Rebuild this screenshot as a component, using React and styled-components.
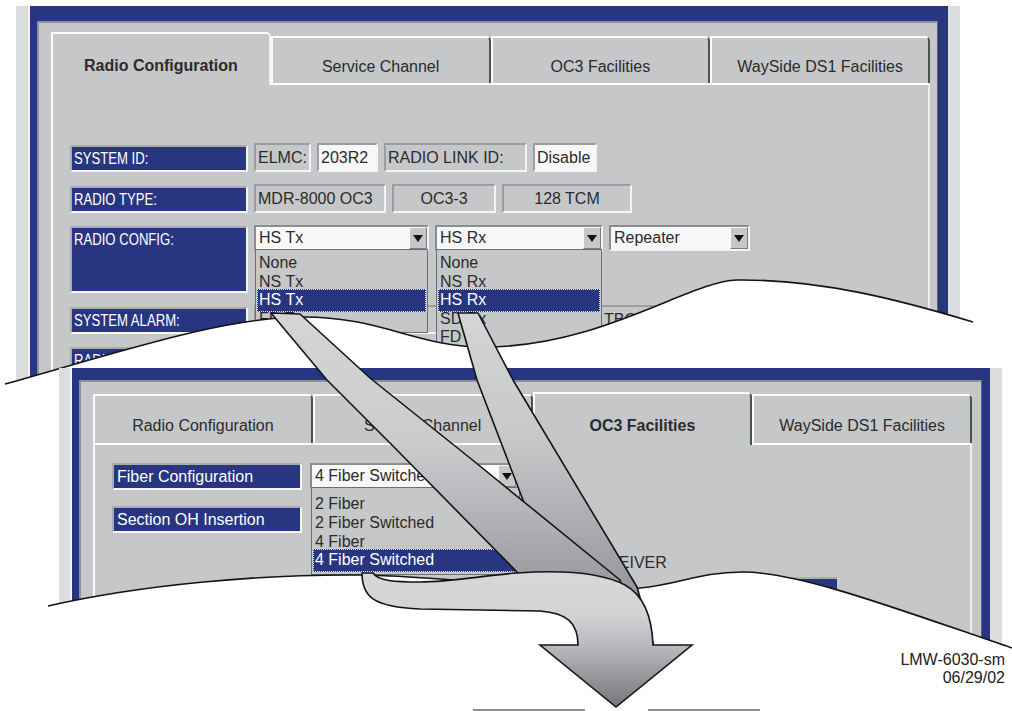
import React from 'react';
import styled, { createGlobalStyle, css } from 'styled-components';

const BLUE = '#283682';
const PANEL = '#c6c7c9';
const INK = '#2b2b2b';

const GlobalStyle = createGlobalStyle`
  html, body {
    margin: 0;
    padding: 0;
    background: #fff;
  }
  body {
    font-family: "Liberation Sans", Arial, sans-serif;
  }
`;

const Canvas = styled.div`
  position: relative;
  width: 1012px;
  height: 711px;
  overflow: hidden;
  background: #fff;
  font-family: "Liberation Sans", Arial, sans-serif;
`;

/* one captured screen, placed on the illustration canvas */
const Screen = styled.div`
  position: absolute;
  isolation: isolate;
  left: ${p => p.$x}px;
  top: ${p => p.$y}px;
  width: ${p => p.$w}px;
  height: ${p => p.$h}px;
  box-sizing: border-box;
  display: flex;
  padding: 0 12px 0 ${p => p.$bezel}px;
  background: #dcdde0;
`;

const Frame = styled.div`
  flex: 1;
  display: flex;
  border-left: 2px solid #f3f3f4;
  background: ${BLUE};
  padding: ${p => p.$top}px ${p => p.$right}px 0 7px;
`;

const Panel = styled.div`
  flex: 1;
  display: flex;
  flex-direction: column;
  background: ${PANEL};
  border-top: 2px solid #8d9199;
  border-left: 2px solid #8d9199;
  border-right: 1px solid #5d6168;
  padding: ${p => p.$top}px ${p => p.$right}px 0 12px;
`;

const TabBar = styled.div`
  display: flex;
  align-items: flex-end;
  height: 51px;
  position: relative;
  z-index: 2;
`;

const Tab = styled.div`
  flex: 1;
  box-sizing: border-box;
  height: ${p => (p.$active ? 53 : p.$h)}px;
  margin-bottom: ${p => (p.$active ? -2 : 0)}px;
  padding-top: 12px;
  display: flex;
  align-items: center;
  justify-content: center;
  background: ${PANEL};
  border-top: 2px solid #fbfbfb;
  border-left: 2px solid #fbfbfb;
  border-right: 2px solid ${p => p.$edge || '#4b5152'};
  border-top-right-radius: 5px;
  font-size: 16px;
  font-weight: ${p => (p.$active ? 700 : 400)};
  color: ${INK};
  white-space: nowrap;
`;

const TabBody = styled.div`
  flex: 1;
  display: flex;
  flex-direction: column;
  gap: ${p => p.$gap}px;
  border: 2px solid #fbfbfb;
  border-right-color: #eceef0;
  border-bottom: none;
  padding: ${p => p.$top}px 17px 0;
`;

const Row = styled.div`
  display: flex;
  align-items: flex-start;
  gap: ${p => p.$gap}px;
`;

const Label = styled.div`
  flex: none;
  box-sizing: border-box;
  width: ${p => p.$w}px;
  height: ${p => p.$h || 27}px;
  padding: 0 ${p => p.$pad}px;
  background: ${BLUE};
  border: 2px solid;
  border-color: #a9abb0 #f5f5f5 #f5f5f5 #a9abb0;
  color: #fff;
  font-size: 16px;
  line-height: 23px;
  white-space: nowrap;
  overflow: hidden;
`;

const Narrow = styled.span`
  display: inline-block;
  transform: scaleX(0.82);
  transform-origin: left center;
`;

const Field = styled.div`
  flex: none;
  box-sizing: border-box;
  width: ${p => p.$w}px;
  height: 29px;
  margin-top: -2px;
  padding: 0 ${p => (p.$center ? 0 : 2)}px;
  border: 2px solid;
  border-color: #9a9da2 #f4f4f4 #f4f4f4 #9a9da2;
  background: ${p => (p.$white ? '#f8f8f8' : PANEL)};
  text-align: ${p => (p.$center ? 'center' : 'left')};
  font-size: 16px;
  line-height: 25px;
  color: ${INK};
  white-space: nowrap;
  overflow: hidden;
`;

const Select = styled.div`
  position: relative;
  flex: none;
  box-sizing: border-box;
  width: ${p => p.$w}px;
  height: 26px;
  margin-top: ${p => p.$mt || 0}px;
  display: flex;
  border: 2px solid;
  border-color: #8a8d92 #f4f4f4 #f4f4f4 #8a8d92;
  background: #f8f8f8;
`;

const SelectValue = styled.div`
  flex: 1;
  padding-left: ${p => p.$pad}px;
  font-size: 16px;
  line-height: 22px;
  color: ${INK};
  white-space: nowrap;
  overflow: hidden;
`;

const DropButton = styled.div`
  flex: none;
  width: 18px;
  box-sizing: border-box;
  display: flex;
  align-items: center;
  justify-content: center;
  background: ${PANEL};
  border: 1px solid;
  border-color: #fafafa #7b7e83 #7b7e83 #fafafa;

  &::after {
    content: '';
    border-left: 5px solid transparent;
    border-right: 5px solid transparent;
    border-top: 7px solid #111;
  }
`;

const List = styled.div`
  position: absolute;
  z-index: 3;
  top: 100%;
  left: -1px;
  right: ${p => p.$right}px;
  box-sizing: border-box;
  padding: ${p => p.$pad}px 1px 4px;
  border: 1px solid #6c6f73;
  background: ${PANEL};
`;

const Option = styled.div`
  height: ${p => p.$pitch}px;
  padding-left: 2px;
  font-size: 16px;
  line-height: ${p => p.$pitch}px;
  color: ${INK};
  white-space: nowrap;
  overflow: hidden;

  ${p =>
    p.$selected &&
    css`
      box-sizing: border-box;
      height: ${p.$pitch + 4}px;
      margin: -2px 0;
      padding-left: 1px;
      line-height: ${p.$pitch + 2}px;
      border: 1px dotted #e3e6f6;
      background: ${BLUE};
      color: #fff;
    `}
`;

const PlainText = styled.div`
  margin-left: ${p => p.$indent}px;
  font-size: 16px;
  line-height: 27px;
  color: ${INK};
  white-space: nowrap;
`;

const Block = styled.div`
  flex: none;
  width: ${p => p.$w}px;
  height: 27px;
  margin: ${p => p.$top}px 0 0 ${p => p.$left}px;
  background: ${BLUE};
  border-top: 2px solid #a9abb0;
`;

const Overlay = styled.svg`
  position: absolute;
  left: 0;
  top: 0;
  width: 1012px;
  height: 711px;
  pointer-events: none;
`;

const Caption = styled.div`
  position: absolute;
  right: 7px;
  top: 651px;
  text-align: right;
  font-size: 16px;
  line-height: 18px;
  color: #222;
`;

const Rule = styled.div`
  position: absolute;
  left: ${p => p.$x}px;
  top: 709px;
  width: ${p => p.$w}px;
  height: 2px;
  background: #8e8e8e;
`;

const TOP_CURVE =
  'M5,384 C120,352 220,318 300,317 C380,316 420,348 485,347 C600,347 690,281 737,280 C820,279 900,300 973,322';
const BOTTOM_CURVE =
  'M48,606 C140,585 260,574 360,575 C460,576 560,595 640,588 C680,584 700,572 743,572 C800,572 900,610 1012,648';

const Tear = ({ curve, close }) => (
  <Overlay viewBox="0 0 1012 711">
    <path d={curve + close} fill="#fff" />
    <path d={curve} fill="none" stroke="#141414" strokeWidth="1.6" />
  </Overlay>
);

const Arrows = () => (
  <Overlay viewBox="0 0 1012 711">
    <defs>
      <linearGradient id="bandB" gradientUnits="userSpaceOnUse" x1="0" y1="313" x2="0" y2="620">
        <stop offset="0" stopColor="#d4d5d7" />
        <stop offset="0.4" stopColor="#c7c8ca" />
        <stop offset="1" stopColor="#8d8e92" />
      </linearGradient>
      <linearGradient id="bandA" gradientUnits="userSpaceOnUse" x1="0" y1="313" x2="0" y2="600">
        <stop offset="0" stopColor="#d4d5d7" />
        <stop offset="0.45" stopColor="#cbccce" />
        <stop offset="0.75" stopColor="#aeafb2" />
        <stop offset="1" stopColor="#939498" />
      </linearGradient>
      <linearGradient id="bigArrow" gradientUnits="userSpaceOnUse" x1="0" y1="575" x2="0" y2="707">
        <stop offset="0" stopColor="#d6d7d9" />
        <stop offset="0.3" stopColor="#d2d3d5" />
        <stop offset="0.55" stopColor="#b7b8bb" />
        <stop offset="1" stopColor="#75767a" />
      </linearGradient>
    </defs>
    <path
      d="M458,313 L478,313 L513,380 L637,587 L655,650 L600,650 L523,500 L477,380 Z"
      fill="url(#bandB)"
      stroke="#141414"
      strokeWidth="1.6"
      strokeLinejoin="round"
    />
    <path
      d="M271,313 L300,314 L370,378 L470,458 L620,580 L635,640 L600,640 L517,572 L390,443 L327,380 Z"
      fill="url(#bandA)"
      stroke="#141414"
      strokeWidth="1.6"
      strokeLinejoin="round"
    />
    <path
      d="M362,573 C362,596 372,607 420,609 L540,611 C566,613 578,622 578,645 L540,645 L616,707 L692,645 L653,645 C652,618 645,596 625,585 C600,572 560,570 517,573 C480,576 450,582 420,582 C395,582 378,581 373,573 Z"
      fill="url(#bigArrow)"
      stroke="#141414"
      strokeWidth="1.6"
      strokeLinejoin="miter"
    />
  </Overlay>
);

const txOptions = ['None', 'NS Tx', 'HS Tx', 'FD Tx'];
const rxOptions = ['None', 'NS Rx', 'HS Rx', 'SD Rx', 'FD Rx'];
const fiberOptions = ['2 Fiber', '2 Fiber Switched', '4 Fiber', '4 Fiber Switched'];

const Dropdown = ({ items, selected, pitch, pad, right }) => (
  <List $pad={pad} $right={right}>
    {items.map(item => (
      <Option key={item} $pitch={pitch} $selected={item === selected}>
        {item}
      </Option>
    ))}
  </List>
);

const TopScreen = () => (
  <Screen $x={16} $y={6} $w={944} $h={400} $bezel={12}>
    <Frame $top={15} $right={10}>
      <Panel $top={9} $right={7}>
        <TabBar>
          <Tab $active $edge="#f4f4f4">Radio Configuration</Tab>
          <Tab $h={47}>Service Channel</Tab>
          <Tab $h={47}>OC3 Facilities</Tab>
          <Tab $h={47}>WaySide DS1 Facilities</Tab>
        </TabBar>
        <TabBody $top={60} $gap={13.5}>
          <Row $gap={6}>
            <Label $w={178} $pad={2}><Narrow>SYSTEM ID:</Narrow></Label>
            <Field $w={57}>ELMC:</Field>
            <Field $w={61} $white>203R2</Field>
            <Field $w={143}>RADIO LINK ID:</Field>
            <Field $w={64} $white>Disable</Field>
          </Row>
          <Row $gap={6}>
            <Label $w={178} $pad={2}><Narrow>RADIO TYPE:</Narrow></Label>
            <Field $w={132}>MDR-8000 OC3</Field>
            <Field $w={104} $center>OC3-3</Field>
            <Field $w={130} $center>128 TCM</Field>
          </Row>
          <Row $gap={6}>
            <Label $w={178} $h={67} $pad={2}><Narrow>RADIO CONFIG:</Narrow></Label>
            <Select $w={175} $mt={-1}>
              <SelectValue $pad={3}>HS Tx</SelectValue>
              <DropButton />
              <Dropdown items={txOptions} selected="HS Tx" pitch={18.5} pad={4} right={-1} />
            </Select>
            <Select $w={168} $mt={-1}>
              <SelectValue $pad={3}>HS Rx</SelectValue>
              <DropButton />
              <Dropdown items={rxOptions} selected="HS Rx" pitch={18.5} pad={4} right={-1} />
            </Select>
            <Select $w={141} $mt={-1}>
              <SelectValue $pad={3}>Repeater</SelectValue>
              <DropButton />
            </Select>
          </Row>
          <Row $gap={6}>
            <Label $w={178} $pad={2}><Narrow>SYSTEM ALARM:</Narrow></Label>
            <Field $w={340} />
            <Field $w={150}>TBOS</Field>
          </Row>
          <Row $gap={6}>
            <Label $w={178} $pad={2}><Narrow>RADIO STATUS:</Narrow></Label>
          </Row>
        </TabBody>
      </Panel>
    </Frame>
  </Screen>
);

const BottomScreen = () => (
  <Screen $x={59} $y={368} $w={943} $h={343} $bezel={11}>
    <Frame $top={12} $right={8}>
      <Panel $top={10} $right={9}>
        <TabBar>
          <Tab $h={49}>Radio Configuration</Tab>
          <Tab $h={49}>Service Channel</Tab>
          <Tab $active>OC3 Facilities</Tab>
          <Tab $h={49}>WaySide DS1 Facilities</Tab>
        </TabBar>
        <TabBody $top={18} $gap={16}>
          <Row $gap={8}>
            <Label $w={190} $pad={3}>Fiber Configuration</Label>
            <Select $w={208}>
              <SelectValue $pad={3}>4 Fiber Switched</SelectValue>
              <DropButton />
              <Dropdown items={fiberOptions} selected="4 Fiber Switched" pitch={18.8} pad={7} right={-4} />
            </Select>
          </Row>
          <Row $gap={8}>
            <Label $w={190} $pad={3}>Section OH Insertion</Label>
          </Row>
          <Row $gap={0}>
            <PlainText $indent={473}>RECEIVER</PlainText>
            <Block $w={60} $top={28} $left={110} />
          </Row>
        </TabBody>
      </Panel>
    </Frame>
  </Screen>
);

export default function App() {
  return (
    <>
      <GlobalStyle />
      <Canvas>
        <TopScreen />
        <Tear curve={TOP_CURVE} close=" L1012,332 L1012,711 L0,711 L0,386 Z" />
        <BottomScreen />
        <Tear curve={BOTTOM_CURVE} close=" L1012,711 L0,711 L0,610 Z" />
        <Arrows />
        <Caption>
          LMW-6030-sm
          <br />
          06/29/02
        </Caption>
        <Rule $x={473} $w={112} />
        <Rule $x={648} $w={112} />
      </Canvas>
    </>
  );
}
